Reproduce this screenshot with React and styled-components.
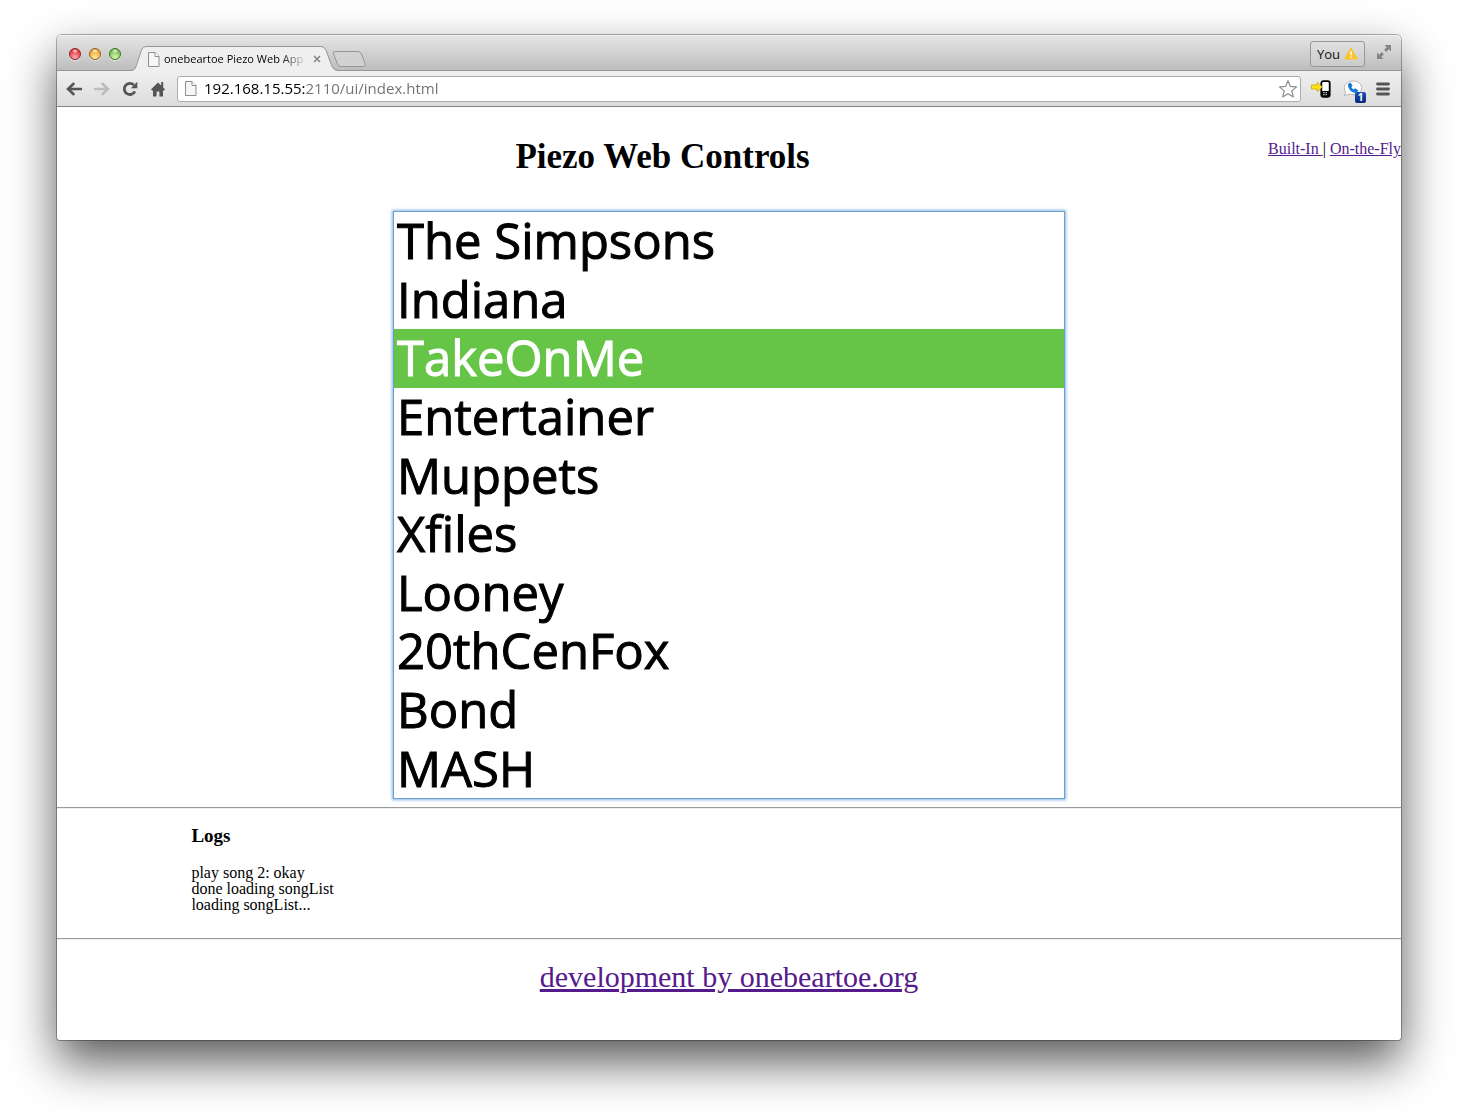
import React, { useState } from "react";
import styled, { createGlobalStyle, css } from "styled-components";

const UI_FONT = '"Open Sans", "Noto Sans", sans-serif';
const PAGE_FONT = '"Liberation Serif", "Times New Roman", serif';

const GlobalStyle = createGlobalStyle`
  *, *::before, *::after { box-sizing: border-box; }
  body {
    margin: 0;
    background: #fff;
    color: #000;
    font-family: ${PAGE_FONT};
    font-size: 16px;
  }
`;

const Desktop = styled.div`
  padding: 35px 57px 79px;
`;

const BrowserWindow = styled.div`
  border-radius: 5px 5px 3px 3px;
  background: #fff;
  box-shadow:
    0 0 0 1px rgba(0, 0, 0, 0.3),
    0 22px 48px rgba(0, 0, 0, 0.66);
`;

const TabStrip = styled.div`
  display: flex;
  align-items: flex-end;
  height: 36px;
  padding: 0 10px 0 12px;
  border-bottom: 1px solid #969696;
  border-radius: 5px 5px 0 0;
  background: linear-gradient(#e6e6e6, #bdbdbd);
  box-shadow: inset 0 1px 0 #f2f2f2;
`;

const Lights = styled.div`
  display: flex;
  align-self: center;
  gap: 8px;
  margin-top: 2px;
`;

const lightColors = {
  red: ["#ffb0b0", "#e2333a", "#8f1f22"],
  amber: ["#ffeaa0", "#eea032", "#93601d"],
  green: ["#dcf8ae", "#74bb4e", "#3c7424"],
};

const Light = styled.button`
  width: 12px;
  height: 12px;
  padding: 0;
  border: 1px solid ${({ $tone }) => lightColors[$tone][2]};
  border-radius: 50%;
  background:
    radial-gradient(ellipse 3px 2px at 50% 20%, rgba(255, 255, 255, 0.95), transparent),
    radial-gradient(circle at 50% 85%, ${({ $tone }) => lightColors[$tone][0]}, ${({ $tone }) => lightColors[$tone][1]} 75%);
  box-shadow: 0 1px 0 rgba(255, 255, 255, 0.5);
`;

const Tab = styled.div`
  position: relative;
  display: flex;
  align-items: center;
  width: 207px;
  height: 25px;
  margin: 0 0 -1px 10px;
  padding: 1px 15px 0 17px;
`;

const TabShape = styled.svg`
  position: absolute;
  inset: 0;
`;

const TabTitle = styled.span`
  position: relative;
  flex: 1;
  margin-left: 4px;
  overflow: hidden;
  white-space: nowrap;
  font: 11px/16px ${UI_FONT};
  mask-image: linear-gradient(to right, #000 116px, transparent 144px);
`;

const iconReset = css`
  display: grid;
  place-items: center;
  flex: none;
  padding: 0;
  border: 0;
  background: none;
`;

const TabClose = styled.button`
  ${iconReset}
  position: relative;
  width: 12px;
  height: 16px;
`;

const NewTab = styled.button`
  ${iconReset}
  width: 34px;
  height: 16px;
  margin: 0 0 3px -6px;
`;

const WindowTools = styled.div`
  display: flex;
  align-self: center;
  align-items: center;
  gap: 12px;
  margin: 2px 0 0 auto;
`;

const ProfileButton = styled.button`
  display: flex;
  align-items: center;
  justify-content: center;
  gap: 4px;
  width: 55px;
  height: 26px;
  padding: 0;
  border: 1px solid #989898;
  border-radius: 3px;
  background: linear-gradient(#dfdfdf, #cbcbcb);
  color: #111;
  font: 13px/16px ${UI_FONT};
`;

const ScreenButton = styled.button`
  ${iconReset}
  width: 14px;
  height: 16px;
  margin-bottom: 4px;
`;

const Toolbar = styled.div`
  display: flex;
  align-items: center;
  height: 36px;
  padding: 0 4px 0 7px;
  border-bottom: 1px solid #858585;
  background: linear-gradient(#f0f0f0, #dcdcdc);
`;

const ToolButton = styled.button`
  ${iconReset}
  width: ${({ $wide }) => ($wide ? 32 : 28)}px;
  height: 28px;
`;

const NavButtons = styled.div`
  display: flex;
  margin-left: -4px;
  margin-right: 5px;
`;

const AddressBar = styled.form`
  display: flex;
  flex: 1;
  align-items: center;
  height: 26px;
  padding: 0 2px 0 7px;
  border: 1px solid #acacac;
  border-radius: 3px;
  background: #fff;
`;

const AddressInput = styled.input`
  flex: 1;
  min-width: 0;
  height: 24px;
  margin-left: 7px;
  padding: 0 0 2px;
  border: 0;
  outline: 0;
  background: linear-gradient(to right, #000 102px, #707070 102px);
  background-clip: text;
  color: transparent;
  font: 15px/22px ${UI_FONT};
`;

const StarButton = styled.button`
  ${iconReset}
  width: 20px;
  height: 20px;
`;

const Extensions = styled.div`
  display: flex;
  margin-left: 4px;
`;

const ExtensionBadge = styled.span`
  position: absolute;
  right: 3px;
  bottom: 0;
  width: 11px;
  height: 11px;
  border-radius: 2px;
  background: linear-gradient(#1c56b8, #03287e);
  color: #fff;
  font: bold 10px/11px ${UI_FONT};
  text-align: center;
`;

const BadgedButton = styled(ToolButton)`
  position: relative;
`;

const Header = styled.header`
  display: flex;
  align-items: flex-start;
  padding: 30px 0 34px;
`;

const Title = styled.h1`
  flex: 1;
  margin: 0;
  font-size: 35px;
  line-height: 40px;
  text-align: center;
`;

const PageNav = styled.nav`
  padding-top: 3px;
  line-height: 18px;
  white-space: pre;
`;

const Link = styled.a`
  color: #551a8b;
  text-decoration: underline;
`;

const SongList = styled.select`
  display: block;
  width: 50%;
  height: auto;
  margin: 0 auto 8px;
  padding: 0;
  overflow: hidden;
  border: 1px solid #6a9fd0;
  border-radius: 0;
  outline: 0;
  background: #fff;
  box-shadow: 0 0 3px 1px #86b5e3;
  font-family: ${UI_FONT};
  font-size: 49px;
`;

const Song = styled.option`
  display: flex;
  align-items: center;
  height: 1.196em;
  min-height: 0;
  padding: 0 3px 2px;
  color: #000;
  -webkit-text-stroke: 1px #000;

  &:checked {
    background: linear-gradient(#66c547, #66c547);
    -webkit-text-fill-color: #fff;
    -webkit-text-stroke-color: #fff;
  }
`;

const Rule = styled.hr`
  margin: 0;
  border: 0;
  border-top: 1px solid #9a9a9a;
  border-bottom: 1px solid #eee;
`;

const Logs = styled.section`
  padding: 17px 10% 25px;
`;

const LogsTitle = styled.h3`
  margin: 0 0 19px;
  font-size: 19px;
  line-height: 20px;
`;

const LogLine = styled.div`
  line-height: 16px;
`;

const Footer = styled.footer`
  padding: 20px 0 46px;
  font-size: 30px;
  line-height: 34px;
  text-align: center;
`;

const FileIcon = () => (
  <svg width="12" height="15" viewBox="0 0 12 15">
    <path d="M.5.5h6.5l4 4v10H.5z" fill="#f6f6f6" stroke="#8e8e8e" />
    <path d="M7 .5v4h4" fill="#fff" stroke="#8e8e8e" />
  </svg>
);

const TabFileIcon = styled.span`
  position: relative;
  display: flex;
`;

const BackIcon = ({ color }) => (
  <svg width="16" height="14" viewBox="0 0 16 14" fill="none" stroke={color}>
    <path d="M2 7h13" strokeWidth="2.6" strokeLinecap="round" />
    <path d="M7.5 1.8 2.2 7l5.3 5.2" strokeWidth="2.6" strokeLinecap="round" strokeLinejoin="miter" />
  </svg>
);

const ForwardIcon = ({ color }) => (
  <svg width="16" height="14" viewBox="0 0 16 14" fill="none" stroke={color}>
    <path d="M1 7h13" strokeWidth="2.6" strokeLinecap="round" />
    <path d="m8.5 1.8 5.3 5.2-5.3 5.2" strokeWidth="2.6" strokeLinecap="round" />
  </svg>
);

const ReloadIcon = () => (
  <svg width="16" height="16" viewBox="0 0 16 16">
    <path d="M12.9 10.4A5.6 5.6 0 1 1 11.9 4" fill="none" stroke="#555" strokeWidth="2.8" />
    <path d="M15.3.8v6.4H8.9z" fill="#555" />
  </svg>
);

const HomeIcon = () => (
  <svg width="16" height="16" viewBox="0 0 16 16" fill="#555">
    <path d="M8 1.4.9 8.4l1.2 1H3V15.6h3.6V10.4h2.8v5.2H13V9.4h.9l1.2-1-1.9-1.9V1h-2v3.4z" />
  </svg>
);

const StarIcon = () => (
  <svg width="20" height="20" viewBox="0 0 20 20">
    <path
      d="m10 1.7 2.4 5.7 6.1.5-4.7 4 1.5 6-5.3-3.2-5.3 3.2 1.5-6-4.7-4 6.1-.5z"
      fill="#fff"
      stroke="#8c8c8c"
      strokeWidth="1.2"
      strokeLinejoin="round"
    />
  </svg>
);

const PhoneIcon = () => (
  <svg width="20" height="18" viewBox="0 0 20 18">
    <rect x="10.3" y="1.2" width="8.4" height="15.6" rx="2" fill="#fff" stroke="#000" strokeWidth="1.8" />
    <path d="M10 11h9v6h-9z" fill="#000" />
    <path d="M12.2 12.7h1.4m.9 0h1.4m-3.7 2h1.4m.9 0h1.4" stroke="#fff" strokeWidth="1" />
    <path d="M.5 5h5.7V2.2l5 4.8-5 4.8V9H.5z" fill="#ffe21a" stroke="#cba700" strokeWidth=".8" />
  </svg>
);

const VoiceIcon = () => (
  <svg width="20" height="18" viewBox="0 0 20 18">
    <path d="M10 1c5 0 8.6 2.9 8.6 6.8s-3.6 6.8-8.6 6.8c-1.3 0-2.5-.2-3.6-.6L1 15.6l1.7-3.4C1.8 11 1.3 9.5 1.3 7.8 1.3 3.9 5 1 10 1z" fill="#fff" stroke="#b8b8b8" />
    <path d="M7.3 2.6 5 4C4.7 9 8.7 13 13.5 13L15.3 10.6 12.3 8.2 10.6 9.4C9.5 8.8 8.9 8.1 8.4 7L9.6 5.5z" fill="#1677d6" />
  </svg>
);

const MenuIcon = () => (
  <svg width="14" height="14" viewBox="0 0 14 14" stroke="#555" strokeLinecap="round">
    <path d="M1.5 2h11M1.5 7h11M1.5 12h11" strokeWidth="2.8" />
  </svg>
);

const WarningIcon = () => (
  <svg width="14" height="13" viewBox="0 0 14 13">
    <path d="M7 1 13.3 12H.7z" fill="#fdc326" stroke="#fdc326" strokeLinejoin="round" />
    <path d="M7 4.3v3.9M7 9.5v1.4" stroke="#fff" strokeWidth="1.5" />
  </svg>
);

const FullScreenIcon = () => (
  <svg width="14" height="14" viewBox="0 0 14 14" fill="#858585">
    <path d="M7.5 0H14v6.5l-2.2-2.2-2.6 2.6-2.1-2.1 2.6-2.6z" />
    <path d="M6.5 14H0V7.5l2.2 2.2 2.6-2.6 2.1 2.1-2.6 2.6z" />
  </svg>
);

const songs = [
  "The Simpsons",
  "Indiana",
  "TakeOnMe",
  "Entertainer",
  "Muppets",
  "Xfiles",
  "Looney",
  "20thCenFox",
  "Bond",
  "MASH",
];

const logs = ["play song 2: okay", "done loading songList", "loading songList..."];

export default function App() {
  const [song, setSong] = useState("TakeOnMe");

  return (
    <>
      <GlobalStyle />
      <Desktop>
        <BrowserWindow>
          <TabStrip>
            <Lights>
              <Light $tone="red" aria-label="Close window" />
              <Light $tone="amber" aria-label="Minimize window" />
              <Light $tone="green" aria-label="Zoom window" />
            </Lights>
            <Tab>
              <TabShape width="207" height="25" viewBox="0 0 207 25">
                <path
                  d="M0 25C3 24.5 4 23 5 20.5L10.5 4Q12 .5 15 .5H190Q193.5.5 195 4L201 20.5Q203 24.5 207 25z"
                  fill="#efefef"
                />
                <path
                  d="M0 24.5C3 24 4 23 5 20.5L10.5 4Q12 .5 15 .5H190Q193.5.5 195 4L201 20.5Q203 24.5 207 24.5"
                  fill="none"
                  stroke="#969696"
                />
              </TabShape>
              <TabFileIcon>
                <FileIcon />
              </TabFileIcon>
              <TabTitle>onebeartoe Piezo Web App</TabTitle>
              <TabClose aria-label="Close tab">
                <svg width="8" height="8" viewBox="0 0 8 8">
                  <path d="m1 1 6 6M7 1 1 7" stroke="#858585" strokeWidth="1.6" />
                </svg>
              </TabClose>
            </Tab>
            <NewTab aria-label="New tab">
              <svg width="34" height="16" viewBox="0 0 34 16">
                <path
                  d="M3 .5h23q2.5 0 3.5 2.5l3.5 9.5q1 3-1.5 3H9q-2.5 0-3.5-2.5L1.5 3Q.5.5 3 .5z"
                  fill="#d2d2d2"
                  stroke="#969696"
                />
              </svg>
            </NewTab>
            <WindowTools>
              <ProfileButton>
                You <WarningIcon />
              </ProfileButton>
              <ScreenButton aria-label="Full screen">
                <FullScreenIcon />
              </ScreenButton>
            </WindowTools>
          </TabStrip>

          <Toolbar>
            <NavButtons>
              <ToolButton aria-label="Back"><BackIcon color="#555" /></ToolButton>
              <ToolButton aria-label="Forward"><ForwardIcon color="#bdbdbd" /></ToolButton>
              <ToolButton aria-label="Reload"><ReloadIcon /></ToolButton>
              <ToolButton aria-label="Home"><HomeIcon /></ToolButton>
            </NavButtons>
            <AddressBar onSubmit={(event) => event.preventDefault()}>
              <FileIcon />
              <AddressInput aria-label="Address" defaultValue="192.168.15.55:2110/ui/index.html" />
              <StarButton type="button" aria-label="Bookmark">
                <StarIcon />
              </StarButton>
            </AddressBar>
            <Extensions>
              <ToolButton $wide aria-label="Send to phone"><PhoneIcon /></ToolButton>
              <BadgedButton $wide aria-label="Voice">
                <VoiceIcon />
                <ExtensionBadge>1</ExtensionBadge>
              </BadgedButton>
              <ToolButton aria-label="Menu"><MenuIcon /></ToolButton>
            </Extensions>
          </Toolbar>

          <main>
            <Header>
              <Title>Piezo Web Controls</Title>
              <PageNav>
                <Link href="#built-in">Built-In </Link>| <Link href="#on-the-fly">On-the-Fly</Link>
              </PageNav>
            </Header>
            <SongList size={10} aria-label="Songs" value={song} onChange={(event) => setSong(event.target.value)}>
              {songs.map((name) => (
                <Song key={name} value={name}>{name}</Song>
              ))}
            </SongList>
            <Rule />
            <Logs>
              <LogsTitle>Logs</LogsTitle>
              {logs.map((line) => (
                <LogLine key={line}>{line}</LogLine>
              ))}
            </Logs>
            <Rule />
          </main>
          <Footer>
            <Link href="#onebeartoe">development by onebeartoe.org</Link>
          </Footer>
        </BrowserWindow>
      </Desktop>
    </>
  );
}
